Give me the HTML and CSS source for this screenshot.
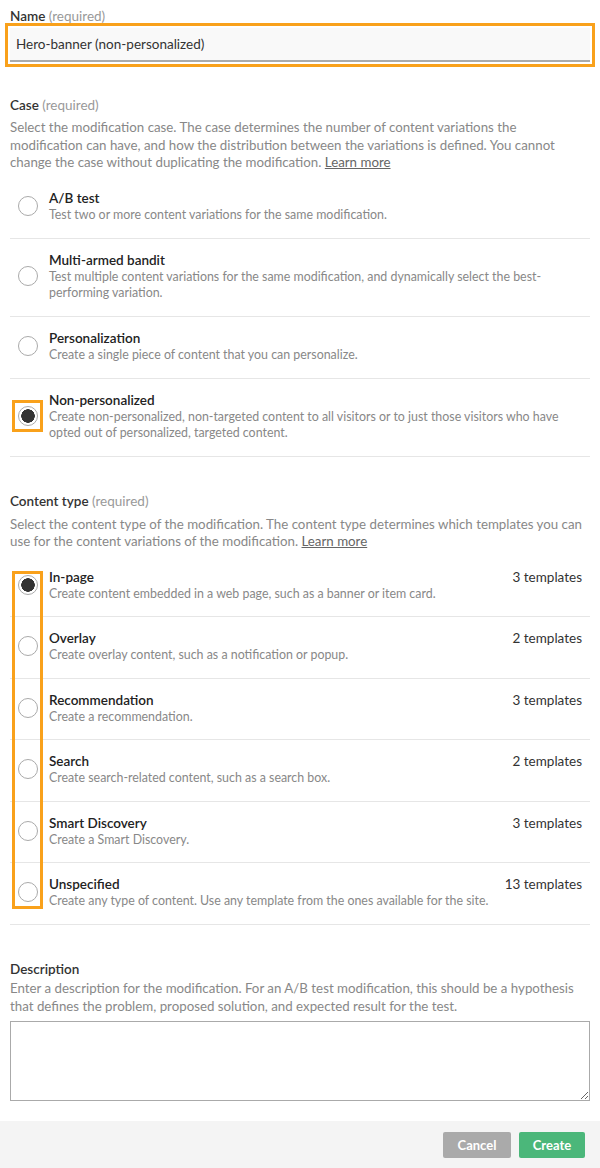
FILE: index.html
```html
<!DOCTYPE html>
<html>
<head>
<meta charset="utf-8">
<link rel="stylesheet" href="styles.css">
</head>
<body>
<div class="page">
  <div class="field">
    <div class="label">Name <span class="req">(required)</span></div>
    <div class="input-wrap hl">
      <div class="input">Hero-banner (non-personalized)</div>
    </div>
  </div>

  <div class="section case">
    <div class="label">Case <span class="req">(required)</span></div>
    <p class="help">Select the modification case. The case determines the number of content variations the<br>modification can have, and how the distribution between the variations is defined. You cannot<br>change the case without duplicating the modification. <a class="link">Learn more</a></p>
    <div class="options">
      <div class="opt">
        <span class="radio-cell"><span class="radio"></span></span>
        <div class="opt-body">
          <div class="opt-title">A/B test</div>
          <div class="opt-desc">Test two or more content variations for the same modification.</div>
        </div>
      </div>
      <div class="opt">
        <span class="radio-cell"><span class="radio"></span></span>
        <div class="opt-body">
          <div class="opt-title">Multi-armed bandit</div>
          <div class="opt-desc">Test multiple content variations for the same modification, and dynamically select the best-<br>performing variation.</div>
        </div>
      </div>
      <div class="opt">
        <span class="radio-cell"><span class="radio"></span></span>
        <div class="opt-body">
          <div class="opt-title">Personalization</div>
          <div class="opt-desc">Create a single piece of content that you can personalize.</div>
        </div>
      </div>
      <div class="opt">
        <span class="radio-cell hl-radio"><span class="radio checked"></span></span>
        <div class="opt-body">
          <div class="opt-title">Non-personalized</div>
          <div class="opt-desc">Create non-personalized, non-targeted content to all visitors or to just those visitors who have<br>opted out of personalized, targeted content.</div>
        </div>
      </div>
    </div>
  </div>

  <div class="section ctype">
    <div class="label">Content type <span class="req">(required)</span></div>
    <p class="help">Select the content type of the modification. The content type determines which templates you can<br>use for the content variations of the modification. <a class="link">Learn more</a></p>
    <div class="options types">
      <div class="hl-col"></div>
      <div class="opt">
        <span class="radio-cell"><span class="radio checked"></span></span>
        <div class="opt-body">
          <div class="opt-title">In-page</div>
          <div class="opt-desc">Create content embedded in a web page, such as a banner or item card.</div>
        </div>
        <div class="count">3 templates</div>
      </div>
      <div class="opt">
        <span class="radio-cell"><span class="radio"></span></span>
        <div class="opt-body">
          <div class="opt-title">Overlay</div>
          <div class="opt-desc">Create overlay content, such as a notification or popup.</div>
        </div>
        <div class="count">2 templates</div>
      </div>
      <div class="opt">
        <span class="radio-cell"><span class="radio"></span></span>
        <div class="opt-body">
          <div class="opt-title">Recommendation</div>
          <div class="opt-desc">Create a recommendation.</div>
        </div>
        <div class="count">3 templates</div>
      </div>
      <div class="opt">
        <span class="radio-cell"><span class="radio"></span></span>
        <div class="opt-body">
          <div class="opt-title">Search</div>
          <div class="opt-desc">Create search-related content, such as a search box.</div>
        </div>
        <div class="count">2 templates</div>
      </div>
      <div class="opt">
        <span class="radio-cell"><span class="radio"></span></span>
        <div class="opt-body">
          <div class="opt-title">Smart Discovery</div>
          <div class="opt-desc">Create a Smart Discovery.</div>
        </div>
        <div class="count">3 templates</div>
      </div>
      <div class="opt">
        <span class="radio-cell"><span class="radio"></span></span>
        <div class="opt-body">
          <div class="opt-title">Unspecified</div>
          <div class="opt-desc">Create any type of content. Use any template from the ones available for the site.</div>
        </div>
        <div class="count">13 templates</div>
      </div>
    </div>
  </div>

  <div class="section desc">
    <div class="label">Description</div>
    <p class="help">Enter a description for the modification. For an A/B test modification, this should be a hypothesis<br>that defines the problem, proposed solution, and expected result for the test.</p>
    <textarea class="textarea"></textarea>
  </div>
</div>
<div class="footer">
  <button class="btn cancel">Cancel</button>
  <button class="btn create">Create</button>
</div>
</body>
</html>
```

FILE: styles.css
```css
* { box-sizing: border-box; }
html, body { margin: 0; padding: 0; background: #fff; }
body {
  font-family: Lato, "Noto Sans", sans-serif;
  color: #333;
  width: 600px;
  height: 1168px;
  display: flex;
  flex-direction: column;
}
.page {
  padding: 7px 10px 0;
  flex: 1;
}
.label {
  font-size: 13.5px;
  line-height: 18px;
  font-weight: 600;
  color: #333;
}
.req { font-weight: 400; color: #999; }

.input-wrap {
  position: relative;
  margin-top: 3px;
}
.input {
  height: 34px;
  background: #f9f9f9;
  border-bottom: 2px solid #aaa;
  padding: 0 6px;
  font-size: 13.5px;
  line-height: 33px;
  color: #333;
}
.hl::after {
  content: "";
  position: absolute;
  inset: -5px;
  border: 3px solid #f9a11b;
  pointer-events: none;
}

.section.case { margin-top: 34px; }
.section.ctype { margin-top: 35px; }
.section.desc { margin-top: 35px; }

.help {
  margin: 5px 0 0;
  font-size: 13.3px;
  line-height: 17.5px;
  color: #888;
  white-space: nowrap;
}
.section.ctype .help { margin-top: 6px; }
.section.desc .help { margin-top: 2px; }
.link { color: #666; text-decoration: underline; }

.options { margin-top: 5px; position: relative; }
.types { margin-top: 5px; }
.opt {
  display: flex;
  align-items: center;
  border-bottom: 1px solid #e6e6e6;
  padding: 12px 0 15px;
}
.types .opt { padding-bottom: 14.6px; }
.radio-cell {
  position: relative;
  flex: none;
  width: 20px;
  height: 20px;
  margin: 0 11px 0 8px;
  align-self: center;
}
.radio {
  display: block;
  width: 20px;
  height: 20px;
  border-radius: 50%;
  border: 1px solid #aaa;
  background: #fff;
}
.radio.checked {
  background: radial-gradient(circle, #333 0 6.5px, #fff 7px);
}
.hl-radio::after {
  content: "";
  position: absolute;
  inset: -6px -5px -6px -6px;
  border: 3px solid #f9a11b;
}
.hl-col {
  position: absolute;
  left: 2px;
  top: 15px;
  width: 31px;
  bottom: 16px;
  border: 3px solid #f9a11b;
  z-index: 2;
  pointer-events: none;
}
.opt-body { flex: 1; min-width: 0; align-self: flex-start; }
.opt-title {
  font-size: 13.5px;
  line-height: 18px;
  font-weight: 600;
  color: #222;
}
.opt-desc {
  font-size: 12.4px;
  line-height: 16px;
  color: #888;
  white-space: nowrap;
}
.count {
  align-self: flex-start;
  font-size: 13.5px;
  line-height: 18px;
  color: #333;
  margin-right: 8px;
  white-space: nowrap;
}

.textarea {
  display: block;
  width: 100%;
  height: 80px;
  margin-top: 6px;
  border: 1px solid #aaa;
  resize: vertical;
  font-family: inherit;
}

.footer {
  height: 47px;
  background: #f4f4f4;
  display: flex;
  justify-content: flex-end;
  align-items: center;
  gap: 8px;
  padding: 0 15px 0 0;
  flex: none;
}
.btn {
  height: 26px;
  border: 0;
  border-radius: 2px;
  color: #fff;
  font-family: inherit;
  font-size: 13px;
  font-weight: 700;
  padding: 0;
}
.cancel { width: 68px; background: #aaa; }
.create { width: 66px; background: #4bb77a; }
```
